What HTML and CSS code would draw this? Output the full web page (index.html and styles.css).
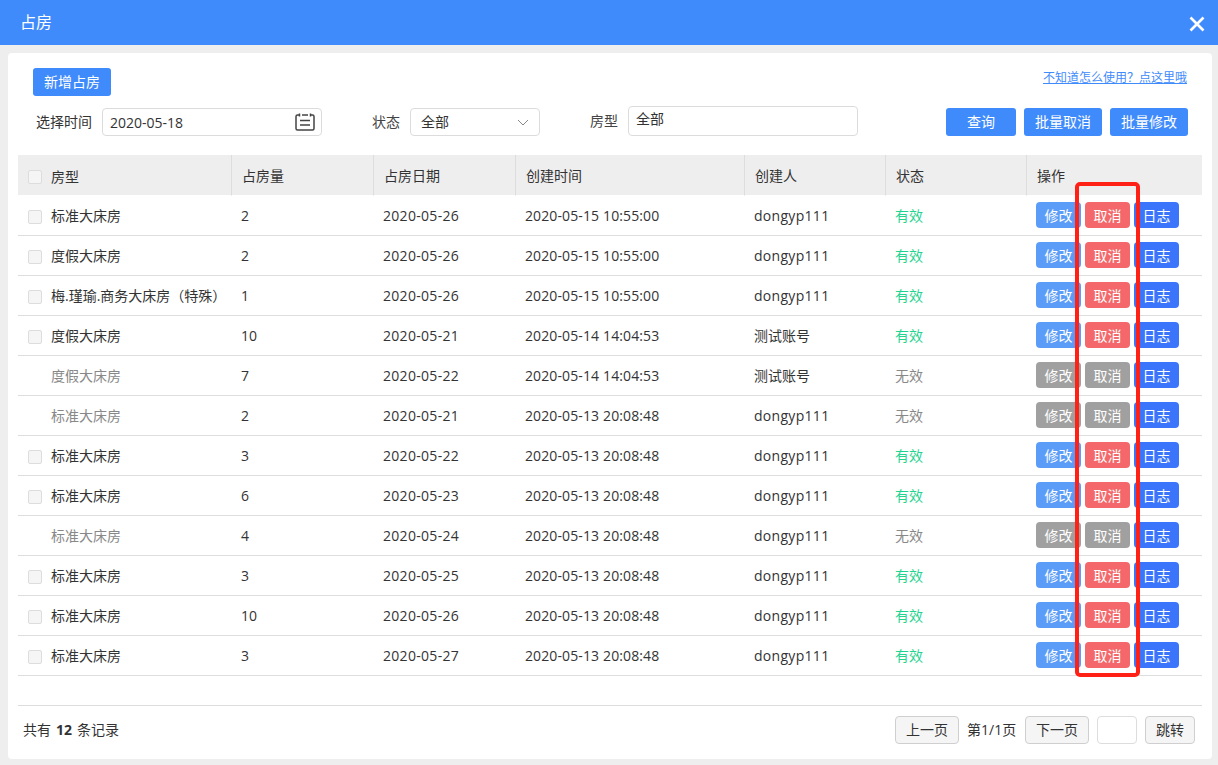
FILE: index.html
```html
<!DOCTYPE html>
<html lang="zh-CN">
<head>
<meta charset="utf-8">
<title>占房</title>
<link rel="stylesheet" href="styles.css">
</head>
<body>
<div class="dialog">
  <header class="titlebar">
    <span class="title">占房</span>
    <svg class="close" viewBox="0 0 16 16" width="16" height="16"><path d="M1.500 1.500 14.500 14.500M14.500 1.500 1.500 14.500" stroke="#fff" stroke-width="2.600" fill="none"/></svg>
  </header>
  <main class="panel">
    <div class="row-top">
      <button class="btn btn-add">新增占房</button>
      <a class="help" href="#">不知道怎么使用？点这里哦</a>
    </div>
    <div class="filters">
      <label class="lbl lbl-time">选择时间</label>
      <div class="field field-date">
        <span>2020-05-18</span>
        <svg class="cal" viewBox="0 0 20 18" width="20" height="18"><path d="M4 2H2.500A1.500 1.500 0 0 0 1 3.500V15.500A1.500 1.500 0 0 0 2.500 17H17.500A1.500 1.500 0 0 0 19 15.500V3.500A1.500 1.500 0 0 0 17.500 2H16M7 2H13M4.500 0.500V3.500M15.500 0.500V3.500M5 7.500H15M5 12H15" stroke="#444" stroke-width="1.500" fill="none"/></svg>
      </div>
      <label class="lbl lbl-status">状态</label>
      <div class="field field-select">
        <span>全部</span>
        <svg class="chev" viewBox="0 0 12 7" width="12" height="7"><path d="M1 1 6 6 11 1" stroke="#888" stroke-width="1" fill="none"/></svg>
      </div>
      <label class="lbl lbl-type">房型</label>
      <div class="field field-type"><span>全部</span></div>
      <div class="actions">
        <button class="btn btn-query">查询</button>
        <button class="btn btn-batch">批量取消</button>
        <button class="btn btn-batch">批量修改</button>
      </div>
    </div>
    <table class="grid">
      <colgroup>
        <col class="c1"><col class="c2"><col class="c3"><col class="c4"><col class="c5"><col class="c6"><col class="c7">
      </colgroup>
      <thead>
        <tr>
          <th><div class="name"><i class="check"></i>房型</div></th>
          <th>占房量</th><th>占房日期</th><th>创建时间</th><th>创建人</th><th>状态</th><th>操作</th>
        </tr>
      </thead>
      <tbody>
        <tr><td><div class="name"><i class="check"></i>标准大床房</div></td><td>2</td><td>2020-05-26</td><td>2020-05-15 10:55:00</td><td>dongyp111</td><td class="ok">有效</td><td><div class="ops"><button class="op edit">修改</button><button class="op cancel">取消</button><button class="op log">日志</button></div></td></tr>
        <tr><td><div class="name"><i class="check"></i>度假大床房</div></td><td>2</td><td>2020-05-26</td><td>2020-05-15 10:55:00</td><td>dongyp111</td><td class="ok">有效</td><td><div class="ops"><button class="op edit">修改</button><button class="op cancel">取消</button><button class="op log">日志</button></div></td></tr>
        <tr><td><div class="name"><i class="check"></i>梅.瑾瑜.商务大床房（特殊）</div></td><td>1</td><td>2020-05-26</td><td>2020-05-15 10:55:00</td><td>dongyp111</td><td class="ok">有效</td><td><div class="ops"><button class="op edit">修改</button><button class="op cancel">取消</button><button class="op log">日志</button></div></td></tr>
        <tr><td><div class="name"><i class="check"></i>度假大床房</div></td><td>10</td><td>2020-05-21</td><td>2020-05-14 14:04:53</td><td class="cn">测试账号</td><td class="ok">有效</td><td><div class="ops"><button class="op edit">修改</button><button class="op cancel">取消</button><button class="op log">日志</button></div></td></tr>
        <tr class="off"><td><div class="name"><i class="nocheck"></i>度假大床房</div></td><td>7</td><td>2020-05-22</td><td>2020-05-14 14:04:53</td><td class="cn">测试账号</td><td class="no">无效</td><td><div class="ops"><button class="op gray">修改</button><button class="op gray">取消</button><button class="op log">日志</button></div></td></tr>
        <tr class="off"><td><div class="name"><i class="nocheck"></i>标准大床房</div></td><td>2</td><td>2020-05-21</td><td>2020-05-13 20:08:48</td><td>dongyp111</td><td class="no">无效</td><td><div class="ops"><button class="op gray">修改</button><button class="op gray">取消</button><button class="op log">日志</button></div></td></tr>
        <tr><td><div class="name"><i class="check"></i>标准大床房</div></td><td>3</td><td>2020-05-22</td><td>2020-05-13 20:08:48</td><td>dongyp111</td><td class="ok">有效</td><td><div class="ops"><button class="op edit">修改</button><button class="op cancel">取消</button><button class="op log">日志</button></div></td></tr>
        <tr><td><div class="name"><i class="check"></i>标准大床房</div></td><td>6</td><td>2020-05-23</td><td>2020-05-13 20:08:48</td><td>dongyp111</td><td class="ok">有效</td><td><div class="ops"><button class="op edit">修改</button><button class="op cancel">取消</button><button class="op log">日志</button></div></td></tr>
        <tr class="off"><td><div class="name"><i class="nocheck"></i>标准大床房</div></td><td>4</td><td>2020-05-24</td><td>2020-05-13 20:08:48</td><td>dongyp111</td><td class="no">无效</td><td><div class="ops"><button class="op gray">修改</button><button class="op gray">取消</button><button class="op log">日志</button></div></td></tr>
        <tr><td><div class="name"><i class="check"></i>标准大床房</div></td><td>3</td><td>2020-05-25</td><td>2020-05-13 20:08:48</td><td>dongyp111</td><td class="ok">有效</td><td><div class="ops"><button class="op edit">修改</button><button class="op cancel">取消</button><button class="op log">日志</button></div></td></tr>
        <tr><td><div class="name"><i class="check"></i>标准大床房</div></td><td>10</td><td>2020-05-26</td><td>2020-05-13 20:08:48</td><td>dongyp111</td><td class="ok">有效</td><td><div class="ops"><button class="op edit">修改</button><button class="op cancel">取消</button><button class="op log">日志</button></div></td></tr>
        <tr><td><div class="name"><i class="check"></i>标准大床房</div></td><td>3</td><td>2020-05-27</td><td>2020-05-13 20:08:48</td><td>dongyp111</td><td class="ok">有效</td><td><div class="ops"><button class="op edit">修改</button><button class="op cancel">取消</button><button class="op log">日志</button></div></td></tr>
      </tbody>
    </table>
    <footer class="pager">
      <span class="total">共有 <b>12</b> 条记录</span>
      <div class="pages">
        <button class="pg pg-wide">上一页</button>
        <span class="pg-info">第1/1页</span>
        <button class="pg pg-wide">下一页</button>
        <span class="pg-input"></span>
        <button class="pg pg-jump">跳转</button>
      </div>
    </footer>
  </main>
  <div class="highlight"></div>
</div>
</body>
</html>
```
FILE: styles.css
```css
* { box-sizing: border-box; }
html, body { margin: 0; height: 100%; overflow: hidden; }
body {
  background: #eeeeee;
  color: #333;
  font-family: "Open Sans", "Noto Sans CJK SC", sans-serif;
  font-size: 14px;
}
.dialog { position: relative; width: 1218px; height: 765px; }
.titlebar {
  height: 45px;
  background: #3f8bfb;
  color: #fff;
  display: flex;
  align-items: center;
  justify-content: space-between;
  padding: 0 13px 3px 20px;
}
.title { font-size: 16px; }
.close { display: block; margin-top: 5px; }
.panel {
  margin: 8px 6px 0 8px;
  width: 1204px;
  height: 706px;
  background: #fff;
  border-radius: 4px;
  padding-top: 15px;
}
.row-top {
  height: 28px;
  display: flex;
  justify-content: space-between;
  padding: 0 25px;
}
.btn {
  border: 0;
  border-radius: 3px;
  background: #3f8bfb;
  color: #fff;
  font: inherit;
  height: 28px;
  padding: 0 0 2px;
}
.btn-add { width: 78px; }
.help { color: #3f8bfb; font-size: 12px; line-height: 18px; margin-top: 1px; }
.filters {
  margin-top: 10px;
  height: 30px;
  display: flex;
  align-items: flex-end;
  padding-left: 28px;
}
.lbl { height: 28px; line-height: 28px; width: 28px; }
.lbl-time { width: 56px; margin-right: 10px; }
.lbl-status { margin-left: 50px; margin-right: 10px; color: #444; }
.lbl-type { margin-left: 50px; margin-right: 10px; color: #444; align-self: center; }
.field {
  border: 1px solid #dcdcdc;
  border-radius: 4px;
  height: 28px;
  display: flex;
  align-items: center;
  justify-content: space-between;
  background: #fff;
}
.field-date { width: 220px; padding: 0 6px 0 7px; }
.field-select { width: 130px; padding: 0 10px 2px; }
.field-select .chev { margin-top: 2px; }
.field-type { width: 230px; height: 30px; padding: 0 7px 6px; }
.cal, .chev { display: block; }
.actions { margin-left: 88px; display: flex; gap: 8px; }
.btn-query { width: 70px; }
.btn-batch { width: 78px; }
.grid {
  margin: 19px 0 0 10px;
  width: 1184px;
  table-layout: fixed;
  border-collapse: separate;
  border-spacing: 0;
}
.c1 { width: 213px; }
.c2, .c3 { width: 142px; }
.c4 { width: 229px; }
.c5, .c6 { width: 141px; }
.c7 { width: 176px; }
th {
  height: 41px;
  background: #eeeeee;
  border-bottom: 1px solid #fff;
  border-left: 1px solid #dddddd;
  font-weight: 400;
  font-size: 14px;
  text-align: left;
  padding: 0 0 1px 10px;
  color: #333;
}
th:first-child { border-left: 0; padding: 1px 0 0 10px; }
td {
  height: 40px;
  border-bottom: 1px solid #dddddd;
  padding: 0 0 0 10px;
  font-size: 14px;
  color: #333;
}
td:nth-child(3) { letter-spacing: 0.3px; }
td:nth-child(4) { letter-spacing: 0.12px; }
td:nth-child(5) { letter-spacing: 0.3px; }
td:nth-child(5).cn { letter-spacing: 0; padding-bottom: 2px; }
td:last-child { padding-bottom: 1px; }
td:first-child { padding-bottom: 2px; }
td.ok, td.no { padding-bottom: 2px; }
.name { display: flex; align-items: center; }
.check, .nocheck { width: 14px; height: 14px; margin-right: 9px; flex: none; }
.check { border: 1px solid #dddddd; background: #f5f5f5; border-radius: 2px; margin-top: 4px; }
th .check { margin-top: 3px; }
td.ok { color: #25d390; }
td.no { color: #888; }
.off td:first-child { color: #888; }
.ops { display: flex; gap: 4px; }
.op {
  width: 45px;
  height: 26px;
  border: 0;
  border-radius: 4px;
  color: #fff;
  font: inherit;
  font-size: 14px;
  padding: 0;
}
.edit { background: #5b9cf8; }
.cancel { background: #f4676a; }
.log { background: #3a75fb; }
.gray { background: #a0a0a0; }
.pager {
  margin: 29px 0 0 10px;
  width: 1184px;
  height: 50px;
  border-top: 1px solid #dddddd;
  display: flex;
  justify-content: space-between;
  align-items: center;
  padding: 0 7px 2px 5px;
}
.total { word-spacing: 1.4px; padding-bottom: 2px; }
.total b { font-size: 14px; }
.pages { display: flex; align-items: center; }
.pg {
  height: 28px;
  background: #f5f5f5;
  border: 1px solid #cfcfcf;
  border-radius: 4px;
  color: #333;
  font: inherit;
  padding: 0 0 1px;
}
.pg-wide { width: 64px; }
.pg-info { width: 50px; margin: 0 8px; white-space: nowrap; padding-bottom: 1px; }
.pg-input { width: 40px; height: 28px; margin: 0 8px; border: 1px solid #dddddd; border-radius: 4px; }
.pg-jump { width: 50px; }
.highlight {
  position: absolute;
  left: 1075px;
  top: 182px;
  width: 65px;
  height: 495px;
  border: 4px solid #ff2016;
  border-radius: 5px;
  pointer-events: none;
}
```
